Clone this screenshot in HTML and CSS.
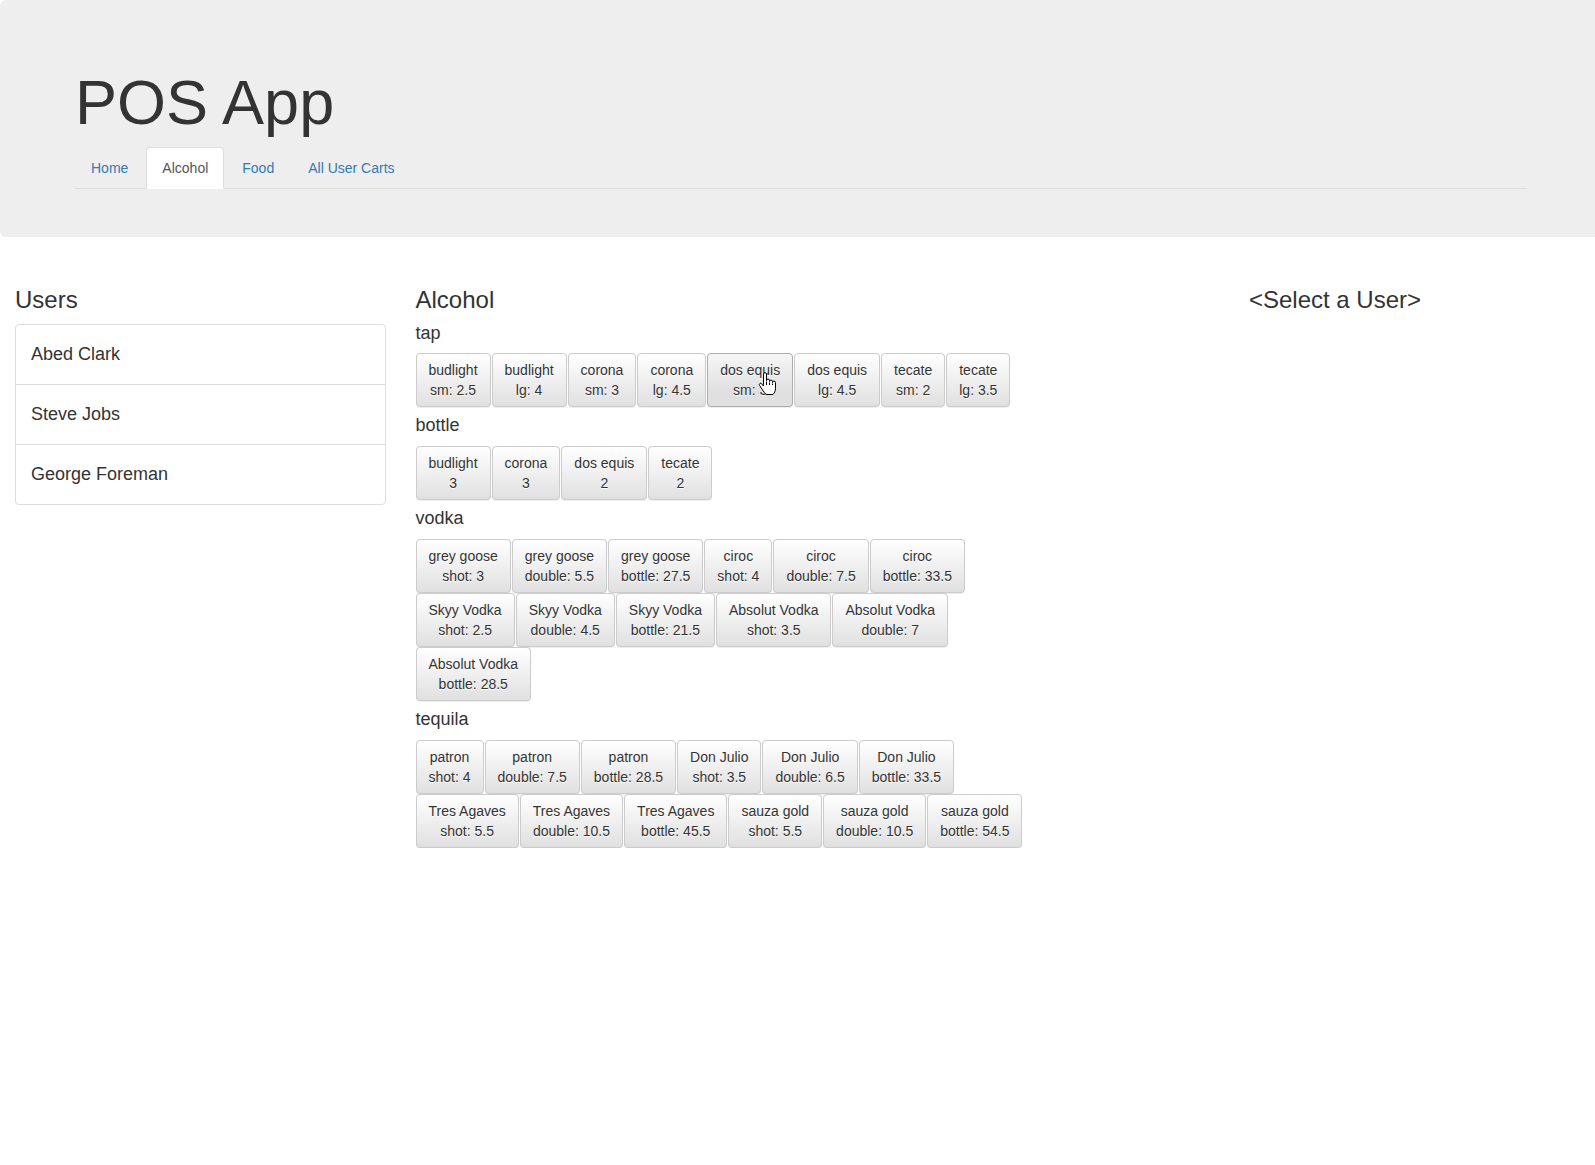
FILE: index.html
```html
<!DOCTYPE html>
<html lang="en">
<head>
<meta charset="utf-8">
<title>POS App</title>
<link rel="stylesheet" href="styles.css">
</head>
<body>
<div class="page">
  <header class="jumbotron">
    <h1 class="title">POS App</h1>
    <ul class="tabs">
      <li><a href="#">Home</a></li>
      <li class="active"><a href="#">Alcohol</a></li>
      <li><a href="#">Food</a></li>
      <li><a href="#">All User Carts</a></li>
    </ul>
  </header>

  <main class="row">
    <section class="col col-users">
      <h3 class="heading">Users</h3>
      <div class="user-list">
        <div class="user-item">Abed Clark</div>
        <div class="user-item">Steve Jobs</div>
        <div class="user-item">George Foreman</div>
      </div>
    </section>

    <section class="col col-menu">
      <h3 class="heading">Alcohol</h3>

      <h4 class="group-label">tap</h4>
      <div class="btns">
        <button class="btn">budlight<br>sm: 2.5</button>
        <button class="btn">budlight<br>lg: 4</button>
        <button class="btn">corona<br>sm: 3</button>
        <button class="btn">corona<br>lg: 4.5</button>
        <button class="btn is-hover">dos equis<br>sm: 3<svg class="cursor" width="20" height="24" viewBox="0 0 20 24"><path d="M5.5 12.5V2.2a1.5 1.5 0 0 1 3 0V8.6a1.5 1.5 0 0 1 3 0v1a1.5 1.5 0 0 1 3 0v1a1.5 1.5 0 0 1 3 0V16.5c0 2.6-1.2 4.6-2.6 6H8.2c-1.4-1.2-2.6-2.8-4-5.2L1.6 13.4a1.3 1.3 0 0 1 2.1-1.6L5.5 14Z" fill="#fff" stroke="#000" stroke-width="1" stroke-linejoin="round"/><path d="M8.5 9.5V13M11.5 10.5V13M14.5 11.5V13" stroke="#000" stroke-width="1"/></svg></button>
        <button class="btn">dos equis<br>lg: 4.5</button>
        <button class="btn">tecate<br>sm: 2</button>
        <button class="btn">tecate<br>lg: 3.5</button>
      </div>

      <h4 class="group-label">bottle</h4>
      <div class="btns">
        <button class="btn">budlight<br>3</button>
        <button class="btn">corona<br>3</button>
        <button class="btn">dos equis<br>2</button>
        <button class="btn">tecate<br>2</button>
      </div>

      <h4 class="group-label">vodka</h4>
      <div class="btns">
        <button class="btn">grey goose<br>shot: 3</button>
        <button class="btn">grey goose<br>double: 5.5</button>
        <button class="btn">grey goose<br>bottle: 27.5</button>
        <button class="btn">ciroc<br>shot: 4</button>
        <button class="btn">ciroc<br>double: 7.5</button>
        <button class="btn">ciroc<br>bottle: 33.5</button>
        <button class="btn">Skyy Vodka<br>shot: 2.5</button>
        <button class="btn">Skyy Vodka<br>double: 4.5</button>
        <button class="btn">Skyy Vodka<br>bottle: 21.5</button>
        <button class="btn">Absolut Vodka<br>shot: 3.5</button>
        <button class="btn">Absolut Vodka<br>double: 7</button>
        <button class="btn">Absolut Vodka<br>bottle: 28.5</button>
      </div>

      <h4 class="group-label">tequila</h4>
      <div class="btns">
        <button class="btn">patron<br>shot: 4</button>
        <button class="btn">patron<br>double: 7.5</button>
        <button class="btn">patron<br>bottle: 28.5</button>
        <button class="btn">Don Julio<br>shot: 3.5</button>
        <button class="btn">Don Julio<br>double: 6.5</button>
        <button class="btn">Don Julio<br>bottle: 33.5</button>
        <button class="btn">Tres Agaves<br>shot: 5.5</button>
        <button class="btn">Tres Agaves<br>double: 10.5</button>
        <button class="btn">Tres Agaves<br>bottle: 45.5</button>
        <button class="btn">sauza gold<br>shot: 5.5</button>
        <button class="btn">sauza gold<br>double: 10.5</button>
        <button class="btn">sauza gold<br>bottle: 54.5</button>
      </div>
    </section>

    <section class="col col-cart">
      <h3 class="heading">&lt;Select a User&gt;</h3>
    </section>
  </main>
</div>
</body>
</html>
```

FILE: styles.css
```css
*, *::before, *::after {
  box-sizing: border-box;
}

html, body {
  margin: 0;
  padding: 0;
}

body {
  overflow-x: hidden;
  font-family: "Liberation Sans", Arial, Helvetica, sans-serif;
  font-size: 14px;
  line-height: 1.42857143;
  color: #333;
  background: #fff;
}

.page {
  width: 1602px;
}

/* ---------- jumbotron ---------- */
.jumbotron {
  background: #eee;
  border-radius: 6px;
  padding: 48px 75px;
  margin-bottom: 30px;
}

.title {
  font-size: 63px;
  line-height: 1.1;
  font-weight: 500;
  margin: 20px 0 10px;
  color: #333;
}

.tabs {
  list-style: none;
  margin: 0;
  padding: 0;
  display: flex;
  border-bottom: 1px solid #ddd;
}

.tabs li {
  margin-bottom: -1px;
}

.tabs a {
  display: block;
  padding: 10px 15px;
  margin-right: 2px;
  border: 1px solid transparent;
  border-radius: 4px 4px 0 0;
  color: #337ab7;
  text-decoration: none;
  line-height: 20px;
}

.tabs .active a {
  color: #555;
  background: #fff;
  border-color: #ddd;
  border-bottom-color: transparent;
}

/* ---------- grid ---------- */
.row {
  display: grid;
  grid-template-columns: 25% 41.6666667% 33.3333333%;
}

.col {
  padding: 0 15px;
  min-width: 0;
}

.heading {
  font-size: 24px;
  line-height: 1.1;
  font-weight: 500;
  margin: 20px 0 10px;
}

.col-cart .heading {
  text-align: center;
}

/* ---------- users ---------- */
.user-list {
  border: 1px solid #ddd;
  border-radius: 4px;
  background: #fff;
}

.user-item {
  padding: 16px 15px 17px;
  font-size: 18px;
  line-height: 26px;
}

.user-item + .user-item {
  border-top: 1px solid #ddd;
}

/* ---------- menu ---------- */
.group-label {
  font-size: 18px;
  line-height: 1.1;
  font-weight: 500;
  margin: 9px 0 10px;
}

.btns {
  display: flex;
  flex-wrap: wrap;
}

.btn {
  position: relative;
  font: inherit;
  font-size: 14px;
  line-height: 20px;
  color: #333;
  text-align: center;
  white-space: nowrap;
  padding: 6px 12px;
  margin: 0 1px 0 0;
  border: 1px solid #ccc;
  border-radius: 4px;
  background-color: #e0e0e0;
  background-image: linear-gradient(to bottom, #fff 0, #e0e0e0 100%);
  background-repeat: repeat-x;
  text-shadow: 0 1px 0 #fff;
  box-shadow: inset 0 1px 0 rgba(255, 255, 255, .15), 0 1px 1px rgba(0, 0, 0, .075);
  cursor: pointer;
  overflow: visible;
}

.btn.is-hover {
  background-color: #e0e0e0;
  background-position: 0 -15px;
  border-color: #adadad;
}

.cursor {
  position: absolute;
  left: 50px;
  top: 18px;
  pointer-events: none;
}
```
